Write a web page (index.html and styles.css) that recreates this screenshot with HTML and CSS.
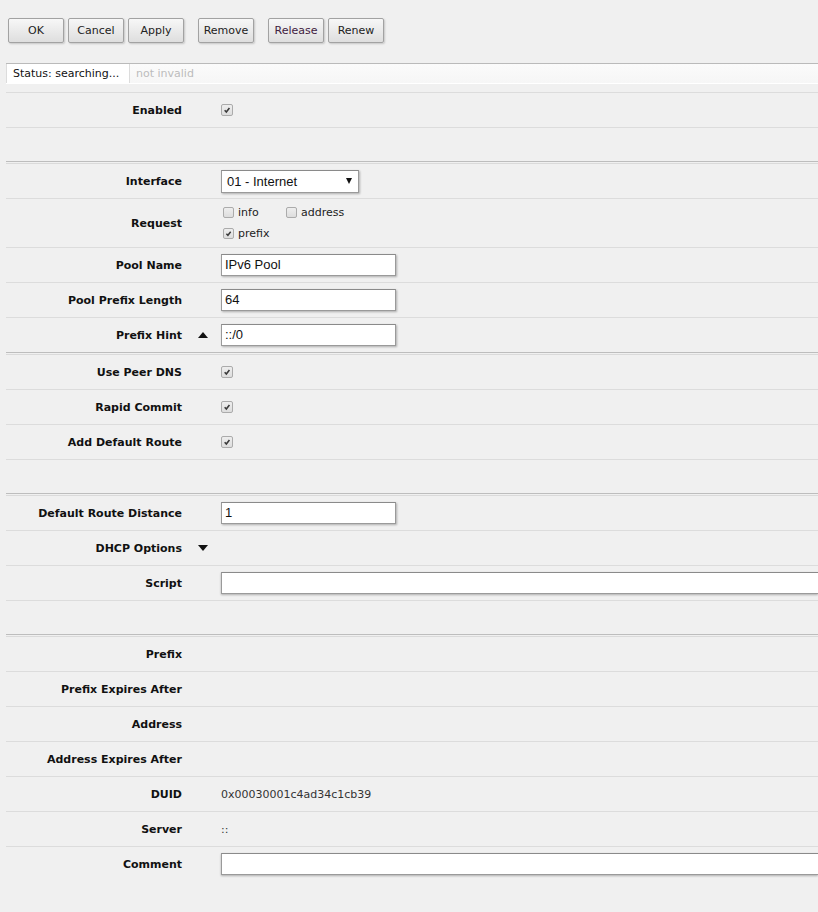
FILE: index.html
```html
<!DOCTYPE html>
<html>
<head>
<meta charset="utf-8">
<link rel="stylesheet" href="styles.css">
</head>
<body>
<div class="toolbar">
  <div class="btn-group">
    <button class="btn">OK</button>
    <button class="btn">Cancel</button>
    <button class="btn">Apply</button>
  </div>
  <div class="btn-group">
    <button class="btn">Remove</button>
  </div>
  <div class="btn-group">
    <button class="btn btn-release">Release</button>
    <button class="btn">Renew</button>
  </div>
</div>

<div class="status">
  <div class="status-main">Status: searching...</div>
  <div class="status-extra">not invalid</div>
</div>

<div class="form">
  <div class="row">
    <div class="label">Enabled</div><div class="toggle"></div>
    <div class="value"><span class="cb checked"><svg viewBox="0 0 12 12"><path d="M3.2 6.3 L5.2 8.4 L8.9 3.6"/></svg></span></div>
  </div>
  <div class="spacer"></div>
  <div class="sep"></div>

  <div class="row">
    <div class="label">Interface</div><div class="toggle"></div>
    <div class="value"><div class="select"><span>01 - Internet</span><i class="sel-arrow"></i></div></div>
  </div>
  <div class="row row-request">
    <div class="label">Request</div><div class="toggle"></div>
    <div class="value value-request">
      <div class="opts">
        <label class="opt"><span class="cb"></span>info</label>
        <label class="opt"><span class="cb"></span>address</label>
      </div>
      <div class="opts">
        <label class="opt"><span class="cb checked"><svg viewBox="0 0 12 12"><path d="M3.2 6.3 L5.2 8.4 L8.9 3.6"/></svg></span>prefix</label>
      </div>
    </div>
  </div>
  <div class="row">
    <div class="label">Pool Name</div><div class="toggle"></div>
    <div class="value"><div class="input">IPv6 Pool</div></div>
  </div>
  <div class="row">
    <div class="label">Pool Prefix Length</div><div class="toggle"></div>
    <div class="value"><div class="input">64</div></div>
  </div>
  <div class="row last">
    <div class="label">Prefix Hint</div><div class="toggle"><i class="tri-up"></i></div>
    <div class="value"><div class="input">::/0</div></div>
  </div>
  <div class="sep"></div>

  <div class="row">
    <div class="label">Use Peer DNS</div><div class="toggle"></div>
    <div class="value"><span class="cb checked"><svg viewBox="0 0 12 12"><path d="M3.2 6.3 L5.2 8.4 L8.9 3.6"/></svg></span></div>
  </div>
  <div class="row">
    <div class="label">Rapid Commit</div><div class="toggle"></div>
    <div class="value"><span class="cb checked"><svg viewBox="0 0 12 12"><path d="M3.2 6.3 L5.2 8.4 L8.9 3.6"/></svg></span></div>
  </div>
  <div class="row">
    <div class="label">Add Default Route</div><div class="toggle"></div>
    <div class="value"><span class="cb checked"><svg viewBox="0 0 12 12"><path d="M3.2 6.3 L5.2 8.4 L8.9 3.6"/></svg></span></div>
  </div>
  <div class="spacer"></div>
  <div class="sep"></div>

  <div class="row">
    <div class="label">Default Route Distance</div><div class="toggle"></div>
    <div class="value"><div class="input">1</div></div>
  </div>
  <div class="row">
    <div class="label">DHCP Options</div><div class="toggle"><i class="tri-down"></i></div>
    <div class="value"></div>
  </div>
  <div class="row">
    <div class="label">Script</div><div class="toggle"></div>
    <div class="value"><div class="input input-wide"></div></div>
  </div>
  <div class="spacer"></div>
  <div class="sep"></div>

  <div class="row">
    <div class="label">Prefix</div><div class="toggle"></div>
    <div class="value"></div>
  </div>
  <div class="row">
    <div class="label">Prefix Expires After</div><div class="toggle"></div>
    <div class="value"></div>
  </div>
  <div class="row">
    <div class="label">Address</div><div class="toggle"></div>
    <div class="value"></div>
  </div>
  <div class="row">
    <div class="label">Address Expires After</div><div class="toggle"></div>
    <div class="value"></div>
  </div>
  <div class="row">
    <div class="label">DUID</div><div class="toggle"></div>
    <div class="value text">0x00030001c4ad34c1cb39</div>
  </div>
  <div class="row">
    <div class="label">Server</div><div class="toggle"></div>
    <div class="value text">::</div>
  </div>
  <div class="row last">
    <div class="label">Comment</div><div class="toggle"></div>
    <div class="value"><div class="input input-wide"></div></div>
  </div>
</div>
</body>
</html>
```
FILE: styles.css
```css
html, body {
  margin: 0;
  padding: 0;
  background: #f0f0f0;
  overflow: hidden;
}
body {
  font-family: "DejaVu Sans", Verdana, sans-serif;
  font-size: 11px;
  color: #222;
  width: 818px;
  height: 912px;
}

.toolbar {
  display: flex;
  gap: 14px;
  padding: 18px 0 0 8px;
}
.btn-group {
  display: flex;
  gap: 4px;
}
.btn {
  width: 56px;
  height: 25px;
  padding: 0;
  margin: 0;
  font-family: "DejaVu Sans", Verdana, sans-serif;
  font-size: 11px;
  color: #222;
  border: 1px solid #a2a2a2;
  border-radius: 2px;
  background: linear-gradient(#f7f7f7, #dedede);
  box-shadow: 1px 1px 2px rgba(0, 0, 0, 0.18);
}
.btn-release {
  color: #402040;
}

.status {
  display: flex;
  margin: 20px 0 8px 6px;
  height: 19px;
  border-top: 1px solid #bababa;
  border-bottom: 1px solid #ffffff;
  background: linear-gradient(#fbfbfb, #f6f6f6);
  line-height: 19px;
}
.status-main {
  width: 116px;
  padding-left: 6px;
  background: #ffffff;
  border-left: 1px solid #dcdcdc;
  border-right: 1px solid #dcdcdc;
  color: #111;
}
.status-extra {
  padding-left: 6px;
  color: #bcbcbc;
}

.form {
  margin-left: 6px;
  border-top: 1px solid #dcdcdc;
}
.row {
  display: grid;
  grid-template-columns: 176px 39px 1fr;
  height: 34px;
  border-bottom: 1px solid #dcdcdc;
  align-items: center;
}
.row.last {
  border-bottom: none;
}
.row-request {
  height: 48px;
}
.label {
  text-align: right;
  font-weight: bold;
  color: #111;
  white-space: nowrap;
}
.toggle {
  display: flex;
  justify-content: center;
  align-items: center;
  padding-left: 3px;
}
.value {
  display: flex;
  align-items: center;
  white-space: nowrap;
  min-width: 0;
}
.value.text {
  color: #333;
}

.spacer {
  height: 33px;
}
.sep {
  height: 1px;
  border-top: 1px solid #bdbdbd;
  border-bottom: 1px solid #dadada;
}

.cb {
  display: inline-block;
  box-sizing: border-box;
  width: 12px;
  height: 12px;
  border: 1px solid #ababab;
  border-radius: 2px;
  background: linear-gradient(#eeeeee, #dddddd);
  flex: none;
}
.cb svg {
  display: block;
  width: 10px;
  height: 10px;
}
.cb svg path {
  fill: none;
  stroke: #3a3a3a;
  stroke-width: 1.9;
}

.value-request {
  flex-direction: column;
  align-items: flex-start;
}
.opts {
  display: flex;
  height: 21px;
  align-items: center;
  padding-left: 2px;
}
.opt {
  display: flex;
  align-items: center;
  gap: 4px;
  width: 63px;
  color: #222;
}
.opt .cb {
  width: 11px;
  height: 11px;
}
.opt .cb svg {
  width: 9px;
  height: 9px;
}

.input, .select {
  box-sizing: border-box;
  height: 22px;
  width: 175px;
  background: #ffffff;
  border: 1px solid #9a9a9a;
  border-top-color: #8a8a8a;
  box-shadow: 1px 1px 2px rgba(0, 0, 0, 0.28);
  font-family: "Liberation Sans", Arial, sans-serif;
  font-size: 13px;
  color: #111;
  line-height: 20px;
  padding-left: 3px;
}
.input-wide {
  width: 100%;
  border-right: none;
  box-shadow: 0 1px 2px rgba(0, 0, 0, 0.28);
}
.select {
  width: 138px;
  height: 23px;
  line-height: 21px;
  padding-left: 5px;
  display: flex;
  justify-content: space-between;
  align-items: center;
  padding-right: 6px;
}
.sel-arrow {
  width: 0;
  height: 0;
  border-left: 3px solid transparent;
  border-right: 3px solid transparent;
  border-top: 6px solid #111;
}
.tri-up {
  width: 0;
  height: 0;
  border-left: 5px solid transparent;
  border-right: 5px solid transparent;
  border-bottom: 6px solid #111;
}
.tri-down {
  width: 0;
  height: 0;
  border-left: 5px solid transparent;
  border-right: 5px solid transparent;
  border-top: 6px solid #111;
}
```
